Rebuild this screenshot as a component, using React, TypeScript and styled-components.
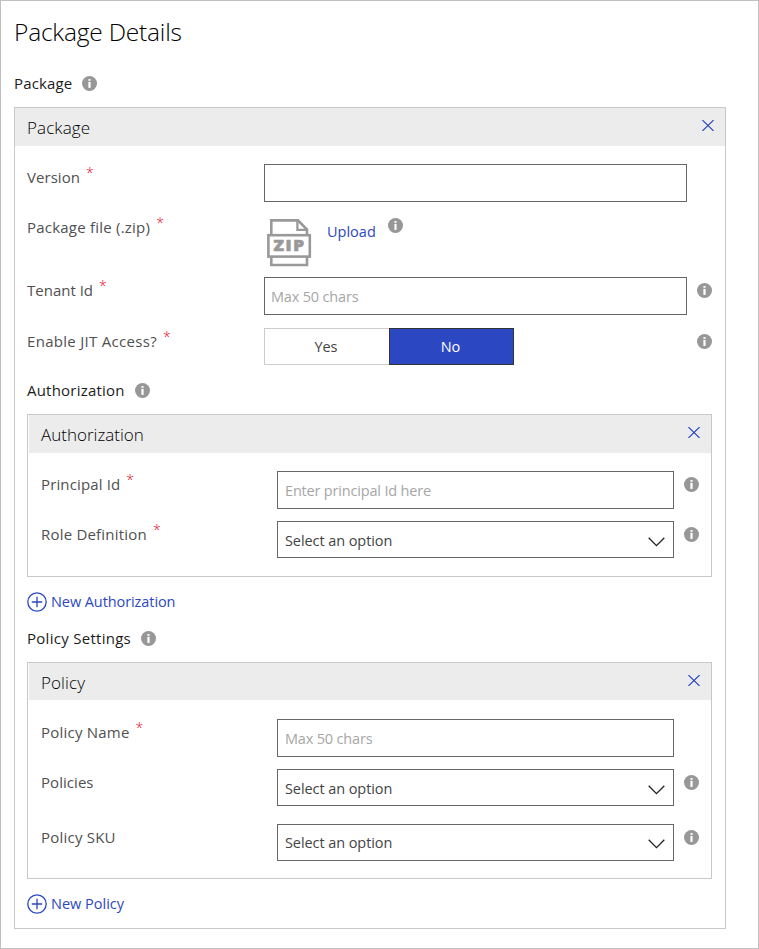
import React from 'react';
import styled, { createGlobalStyle } from 'styled-components';

const BLUE = '#2b48c2';

const GlobalStyle = createGlobalStyle`
  *, *::before, *::after { box-sizing: border-box; }
  body { margin: 0; background: #fff; }
  body, input, button, select { font-family: "Open Sans", "Noto Sans", sans-serif; }
`;

const Page = styled.main`
  width: 759px;
  height: 949px;
  padding: 14px 32px 0 13px;
  border: 1px solid #c0c0c0;
  background: #fff;
`;

const Heading = styled.h1`
  margin: 0 0 24px;
  padding-left: 0;
  font-size: 24.5px;
  font-weight: 300;
  line-height: 34px;
  letter-spacing: -0.2px;
  color: #000;
`;

const SectionLabel = styled.div<{ $top?: number }>`
  display: flex;
  align-items: flex-start;
  gap: 10px;
  margin-top: ${p => p.$top ?? 0}px;
  margin-bottom: 14px;
  font-size: 15px;
  line-height: 20px;
  color: #1c1c1c;
  svg { margin-top: 3px; }
`;

const Track = styled.span<{ $track?: number }>`
  letter-spacing: ${p => p.$track ?? 0}px;
  white-space: nowrap;
`;

const Panel = styled.section`
  border: 1px solid #c8c8c8;
`;

const PanelHeader = styled.header<{ $nested?: boolean; $height?: number }>`
  display: flex;
  justify-content: space-between;
  height: ${p => p.$height ?? 38}px;
  margin-left: ${p => (p.$nested ? 1 : 0)}px;
  padding: 0 11px 0 12px;
  background: #ececec;
`;

const PanelTitle = styled.h2<{ $track?: number }>`
  margin: 0;
  font-size: 17px;
  font-weight: 300;
  line-height: 40px;
  letter-spacing: ${p => p.$track ?? 0}px;
  color: #000;
`;

const CloseButton = styled.button`
  display: flex;
  margin: 12px 0 0;
  padding: 0;
  border: 0;
  background: none;
  height: 11px;
  cursor: pointer;
`;

const PanelBody = styled.div<{ $nested?: boolean; $top?: number; $bottom: number }>`
  padding: ${p => p.$top ?? 18}px ${p => (p.$nested ? 12 : 13)}px ${p => p.$bottom}px ${p => (p.$nested ? 13 : 12)}px;
`;

const Row = styled.div<{ $nested?: boolean; $height: number; $gap?: number }>`
  display: grid;
  grid-template-columns: ${p => (p.$nested ? '236px 397px 25px' : '237px 423px 25px')};
  height: ${p => p.$height}px;
  margin-bottom: ${p => p.$gap ?? 0}px;
`;

const FieldLabel = styled.label`
  display: flex;
  height: 20px;
  margin-top: 3px;
  font-size: 15px;
  line-height: 20px;
  color: #505050;
`;

const Required = styled.span`
  margin: -4px 0 0 6px;
  font-size: 14px;
  font-weight: 300;
  color: #e3001b;
`;

const InfoSlot = styled.span`
  margin: 6px 0 0 10px;
  height: 15px;
`;

const TextInput = styled.input<{ $pad: number }>`
  width: 100%;
  height: 38px;
  padding: 0 ${p => p.$pad}px;
  border: 1px solid #666;
  border-radius: 0;
  background: #fff;
  font-size: 14.5px;
  color: #444;
  outline: none;
  &::placeholder { color: #a6a6a6; opacity: 1; letter-spacing: -0.18px; }
`;

const SelectBox = styled.div<{ $lift?: number }>`
  display: flex;
  justify-content: space-between;
  width: 100%;
  height: 37px;
  padding: 0 8px 0 7px;
  border: 1px solid #666;
  background: #fff;
  font-size: 14.5px;
  line-height: ${p => 37 - 2 * (p.$lift ?? 0)}px;
  color: #444;
  svg { margin-top: ${p => 15 - (p.$lift ?? 0)}px; }
`;

const Upload = styled.div`
  display: flex;
  align-items: flex-start;
  padding: 5px 0 0 3px;
`;

const UploadLink = styled.a`
  margin: 3px 12px 0 15px;
  font-size: 14.5px;
  line-height: 20px;
  color: ${BLUE};
`;

const UploadInfo = styled.span`
  margin-top: -1px;
`;

const Toggle = styled.div`
  display: flex;
  height: 37px;
`;

const ToggleOption = styled.button<{ $active?: boolean }>`
  width: 125px;
  padding: 0 2px 0 0;
  border: 1px solid ${p => (p.$active ? '#333' : '#ccc')};
  border-right-width: ${p => (p.$active ? 1 : 0)}px;
  background: ${p => (p.$active ? BLUE : '#fff')};
  color: ${p => (p.$active ? '#fff' : '#444')};
  font-size: 14.5px;
  line-height: 35px;
  letter-spacing: -0.1px;
`;

const AddButton = styled.button`
  display: flex;
  align-items: center;
  gap: 4px;
  margin-top: 15px;
  padding: 0;
  border: 0;
  height: 20px;
  background: none;
  font-size: 14.5px;
  line-height: 20px;
  color: ${BLUE};
`;

const Info = () => (
  <svg width="15" height="15" viewBox="0 0 15 15" display="block">
    <circle cx="7.5" cy="7.5" r="7.5" fill="#979797" />
    <rect x="6.4" y="3.1" width="2.2" height="1.7" fill="#fff" />
    <rect x="6.4" y="5.9" width="2.2" height="6" fill="#fff" />
  </svg>
);

const Close = () => (
  <CloseButton aria-label="Close">
    <svg width="12" height="11" viewBox="0 0 12 11" fill="none" stroke={BLUE} strokeWidth="1.1">
      <path d="M.4 0 11.6 11M11.6 0 .4 11" />
    </svg>
  </CloseButton>
);

const Chevron = () => (
  <svg width="17" height="10" viewBox="0 0 17 10" fill="none" stroke="#222" strokeWidth="1.3">
    <path d="M.7.7 8.5 8.6 16.3.7" />
  </svg>
);

const Plus = () => (
  <svg width="20" height="20" viewBox="0 0 20 20" fill="none" stroke={BLUE} strokeWidth="1.3">
    <circle cx="10" cy="10" r="9.2" />
    <path d="M10 4.8v10.4M4.8 10h10.4" />
  </svg>
);

const ZipIcon = () => (
  <svg width="45" height="48" viewBox="0 0 45 48" fill="none" stroke="#999" strokeWidth="2.6">
    <path d="M4.3 15V1.4H31L40 10.6V15" />
    <path d="M30.4 1.4V10.8H40" strokeWidth="2.3" />
    <rect x="1.4" y="16.2" width="41.4" height="21.4" />
    <path d="M4.3 38V46H40V38" />
    <text x="6.4" y="32.4" fill="#999" stroke="#999" strokeWidth=".7" fontSize="15.5" fontWeight="800" textLength="32.5" lengthAdjust="spacingAndGlyphs" letterSpacing="1.6">ZIP</text>
  </svg>
);

type FieldProps = {
  label: string;
  track?: number;
  required?: boolean;
  info?: boolean;
  nested?: boolean;
  height: number;
  gap?: number;
  children: React.ReactNode;
};

const Field = ({ label, track, required, info, nested, height, gap, children }: FieldProps) => (
  <Row $nested={nested} $height={height} $gap={gap}>
    <FieldLabel>
      <Track $track={track}>{label}</Track>
      {required && <Required>*</Required>}
    </FieldLabel>
    {children}
    {info && <InfoSlot><Info /></InfoSlot>}
  </Row>
);

const Select = ({ lift }: { lift?: number }) => (
  <SelectBox $lift={lift}>
    <Track $track={-0.08}>Select an option</Track>
    <Chevron />
  </SelectBox>
);

export default function App() {
  return (
    <Page>
      <GlobalStyle />
      <Heading>Package Details</Heading>
      <SectionLabel><Track $track={0.14}>Package</Track><Info /></SectionLabel>
      <Panel>
        <PanelHeader><PanelTitle $track={0.1}>Package</PanelTitle><Close /></PanelHeader>
        <PanelBody $bottom={14}>
          <Field label="Version" track={0.05} required height={38} gap={12}>
            <TextInput $pad={6} />
          </Field>
          <Field label="Package file (.zip)" track={0.22} required height={63}>
            <Upload>
              <ZipIcon />
              <UploadLink>Upload</UploadLink>
              <UploadInfo><Info /></UploadInfo>
            </Upload>
          </Field>
          <Field label="Tenant Id" required info height={38} gap={13}>
            <TextInput $pad={6} placeholder="Max 50 chars" />
          </Field>
          <Field label="Enable JIT Access?" track={0.3} required info height={37}>
            <Toggle>
              <ToggleOption>Yes</ToggleOption>
              <ToggleOption $active>No</ToggleOption>
            </Toggle>
          </Field>

          <SectionLabel $top={15}><Track $track={0.22}>Authorization</Track><Info /></SectionLabel>
          <Panel>
            <PanelHeader $nested><PanelTitle>Authorization</PanelTitle><Close /></PanelHeader>
            <PanelBody $nested $bottom={18}>
              <Field nested label="Principal Id" track={0.14} required info height={38} gap={12}>
                <TextInput $pad={7} placeholder="Enter principal Id here" />
              </Field>
              <Field nested label="Role Definition" track={0.2} required info height={37}>
                <Select />
              </Field>
            </PanelBody>
          </Panel>
          <AddButton><Plus /><Track $track={-0.08}>New Authorization</Track></AddButton>

          <SectionLabel $top={16}><Track $track={0.28}>Policy Settings</Track><Info /></SectionLabel>
          <Panel>
            <PanelHeader $nested $height={37}><PanelTitle $track={0.1}>Policy</PanelTitle><Close /></PanelHeader>
            <PanelBody $nested $top={19} $bottom={17}>
              <Field nested label="Policy Name" track={0.22} required height={38} gap={12}>
                <TextInput $pad={7} placeholder="Max 50 chars" />
              </Field>
              <Field nested label="Policies" track={0.05} info height={37} gap={18}>
                <Select />
              </Field>
              <Field nested label="Policy SKU" track={0.22} info height={37}>
                <Select lift={1} />
              </Field>
            </PanelBody>
          </Panel>
          <AddButton><Plus /><Track>New Policy</Track></AddButton>
        </PanelBody>
      </Panel>
    </Page>
  );
}
